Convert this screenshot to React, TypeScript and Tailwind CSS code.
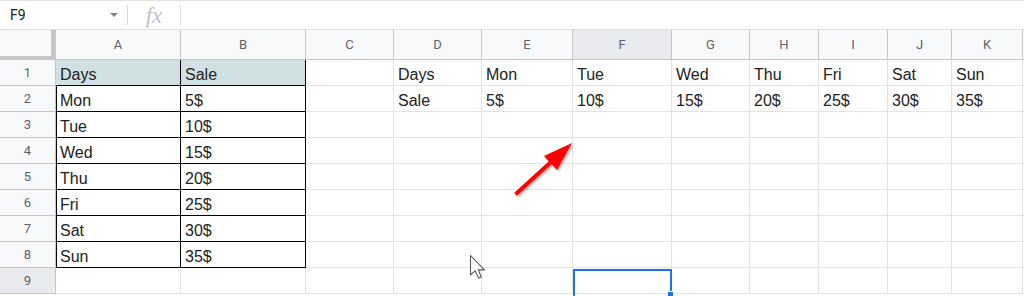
import React from "react";

const cols = [
  { l: "A", w: 125 },
  { l: "B", w: 125 },
  { l: "C", w: 88 },
  { l: "D", w: 88 },
  { l: "E", w: 91 },
  { l: "F", w: 99 },
  { l: "G", w: 78 },
  { l: "H", w: 69 },
  { l: "I", w: 69 },
  { l: "J", w: 64 },
  { l: "K", w: 71 },
];

const days = ["Mon", "Tue", "Wed", "Thu", "Fri", "Sat", "Sun"];
const sales = ["5$", "10$", "15$", "20$", "25$", "30$", "35$"];

function cellValue(r: number, c: number): string {
  if (c === 0) return r === 1 ? "Days" : r <= 8 ? days[r - 2] : "";
  if (c === 1) return r === 1 ? "Sale" : r <= 8 ? sales[r - 2] : "";
  if (r === 1) {
    if (c === 3) return "Days";
    if (c >= 4) return days[c - 4];
  }
  if (r === 2) {
    if (c === 3) return "Sale";
    if (c >= 4) return sales[c - 4];
  }
  return "";
}

export default function App() {
  const rows = [1, 2, 3, 4, 5, 6, 7, 8, 9];
  return (
    <div className="relative w-[1024px] h-[296px] overflow-hidden bg-white" style={{ fontFamily: "Roboto, 'Liberation Sans', sans-serif" }}>
      {/* formula bar */}
      <div className="flex items-center h-[30px] border-t border-b border-[#e1e3e1]">
        <div className="flex items-center w-[127px] h-full pl-[10px] pr-[9px]">
          <span className="text-[14px] text-[#202124]">F9</span>
          <span className="ml-auto w-0 h-0 border-l-[4px] border-r-[4px] border-t-[4px] border-l-transparent border-r-transparent border-t-[#80868b]" />
        </div>
        <div className="w-px h-[20px] bg-[#dadce0]" />
        <div className="flex items-center justify-center w-[52px] h-full">
          <span className="text-[23px] italic text-[#c0c4c8] leading-none" style={{ fontFamily: "'Liberation Serif', serif" }}>fx</span>
        </div>
        <div className="w-px h-[20px] bg-[#dadce0]" />
      </div>

      {/* column header */}
      <div className="flex h-[30px]">
        <div className="w-[56px] h-full bg-[#f8f9fa] border-r-[5px] border-b-[4px] border-[#c4c7c5]" />
        {cols.map((c) => (
          <div
            key={c.l}
            className={`flex items-center justify-center h-full border-r border-b border-[#c4c7c5] text-[13px] text-[#5f6368] ${c.l === "F" ? "bg-[#e8eaed]" : "bg-[#f8f9fa]"}`}
            style={{ width: c.w }}
          >
            {c.l}
          </div>
        ))}
        <div className="flex-1 h-full bg-[#f8f9fa] border-b border-[#c4c7c5]" />
      </div>

      {/* rows */}
      {rows.map((r) => (
        <div key={r} className="flex h-[26px]">
          <div
            className={`flex items-center justify-center w-[56px] h-full border-r border-b border-[#c4c7c5] text-[13px] text-[#5f6368] ${r === 9 ? "bg-[#e8eaed]" : "bg-[#f8f9fa]"}`}
          >
            {r}
          </div>
          {cols.map((c, ci) => {
            const inTable = ci <= 1 && r <= 8;
            let cls = "flex items-end pb-[1px] pl-[4px] h-full border-r border-b text-[16px] leading-[18px] text-[#222] whitespace-nowrap overflow-hidden";
            cls += inTable ? " border-[#000]" : " border-[#e2e3e3]";
            if (inTable && r === 1) cls += " bg-[#d0e0e3]";
            if (ci === 0 && inTable && r >= 2) cls += " shadow-[inset_1px_0_0_#000]";
            return (
              <div key={c.l} className={cls} style={{ width: c.w, fontFamily: "'Liberation Sans', Arial, sans-serif" }}>
                {cellValue(r, ci)}
              </div>
            );
          })}
          <div className="flex-1 h-full border-b border-[#e2e3e3]" />
        </div>
      ))}

      {/* selection F9 */}
      <div className="absolute left-[573px] top-[269px] w-[99px] h-[30px] border-2 border-[#1a73e8]" />
      <div className="absolute left-[667px] top-[291px] w-[7px] h-[7px] bg-[#1a73e8] border border-white" />

      {/* red arrow and cursor */}
      <svg className="absolute left-0 top-0" width="1024" height="296" viewBox="0 0 1024 296">
        <defs>
          <filter id="sh" x="-20%" y="-20%" width="140%" height="140%">
            <feDropShadow dx="1.5" dy="1.5" stdDeviation="1.2" floodColor="#000" floodOpacity="0.35" />
          </filter>
        </defs>
        <g filter="url(#sh)">
          <line x1="517" y1="193" x2="552" y2="161" stroke="#ff0000" strokeWidth="4" strokeLinecap="square" />
          <polygon points="572,143 544,156 557,170" fill="#ff0000" />
        </g>
        <path
          transform="translate(470.5 255.5) scale(1.18)"
          d="M0 0 V16.5 L4 13 L6.8 19.2 L9.2 18.2 L6.6 12.2 L11.8 12.2 Z"
          fill="#fff"
          stroke="#555"
          strokeWidth="0.9"
          strokeLinejoin="round"
        />
      </svg>
    </div>
  );
}
